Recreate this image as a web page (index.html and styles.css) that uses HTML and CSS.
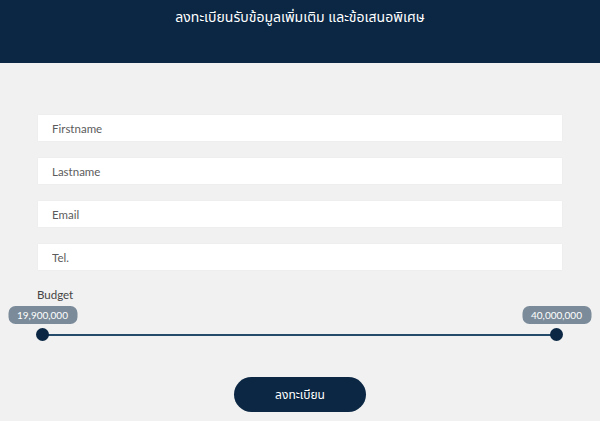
FILE: index.html
```html
<!DOCTYPE html>
<html lang="th">
<head>
<meta charset="utf-8">
<link rel="stylesheet" href="styles.css">
</head>
<body>
<header class="top">
  <h1 class="title">ลงทะเบียนรับข้อมูลเพิ่มเติม และข้อเสนอพิเศษ</h1>
</header>
<main class="form">
  <div class="fields">
    <input class="field" type="text" placeholder="Firstname">
    <input class="field" type="text" placeholder="Lastname">
    <input class="field" type="text" placeholder="Email">
    <input class="field" type="text" placeholder="Tel.">
  </div>
  <div class="budget">
    <div class="budget-label">Budget</div>
    <div class="slider">
      <div class="track"></div>
      <div class="handle handle-left"><span class="tip">19,900,000</span></div>
      <div class="handle handle-right"><span class="tip">40,000,000</span></div>
    </div>
  </div>
  <div class="actions">
    <button class="submit" type="button">ลงทะเบียน</button>
  </div>
</main>
</body>
</html>
```
FILE: styles.css
```css
* { box-sizing: border-box; }
html, body { margin: 0; padding: 0; }
body {
  width: 600px;
  height: 421px;
  overflow: hidden;
  background: #f1f1f1;
  font-family: "Lato", "Noto Sans", "Noto Sans Thai", sans-serif;
}
.top {
  height: 63px;
  background: #0b2744;
  display: flex;
  justify-content: center;
  padding-top: 8px;
}
.title {
  margin: 0;
  color: #ffffff;
  font-size: 14px;
  font-weight: 400;
  line-height: 20px;
  font-family: "Noto Sans Thai", "Noto Sans", sans-serif;
}
.form {
  padding: 52px 38px 0 38px;
}
.fields {
  display: flex;
  flex-direction: column;
  gap: 17px;
}
.field {
  display: block;
  width: 524px;
  height: 26px;
  border: none;
  background: #ffffff;
  padding: 1px 14px 0 14px;
  font-family: "Lato", "Noto Sans", sans-serif;
  font-size: 11.5px;
  color: #555;
  outline: none;
  box-shadow: 0 0 2px rgba(0,0,0,0.04);
}
.field::placeholder { color: #5c5c5c; }
.budget {
  margin-top: 18px;
}
.budget-label {
  font-size: 11.5px;
  color: #444;
  line-height: 14px;
  margin-left: -1px;
}
.slider {
  position: relative;
  height: 42px;
  margin-top: 8px;
}
.track {
  position: absolute;
  left: 4px;
  right: 4px;
  top: 24px;
  height: 2px;
  background: #254b6b;
}
.handle {
  position: absolute;
  top: 18px;
  width: 13px;
  height: 13px;
  border-radius: 50%;
  background: #0b2744;
}
.handle-left { left: -2px; }
.handle-right { right: -1px; }
.tip {
  position: absolute;
  bottom: 17px;
  left: 50%;
  transform: translateX(-50%);
  width: 69px;
  height: 18px;
  border-radius: 7px;
  background: #7b8b99;
  color: #ffffff;
  font-size: 10px;
  line-height: 18px;
  text-align: center;
  white-space: nowrap;
}
.actions {
  display: flex;
  justify-content: center;
  margin-top: 25px;
  margin-left: -38px;
  margin-right: -38px;
}
.submit {
  width: 132px;
  height: 35px;
  border: none;
  border-radius: 18px;
  background: #0b2744;
  color: #ffffff;
  font-family: "Noto Sans Thai", "Noto Sans", sans-serif;
  font-size: 12px;
  cursor: pointer;
}
```
